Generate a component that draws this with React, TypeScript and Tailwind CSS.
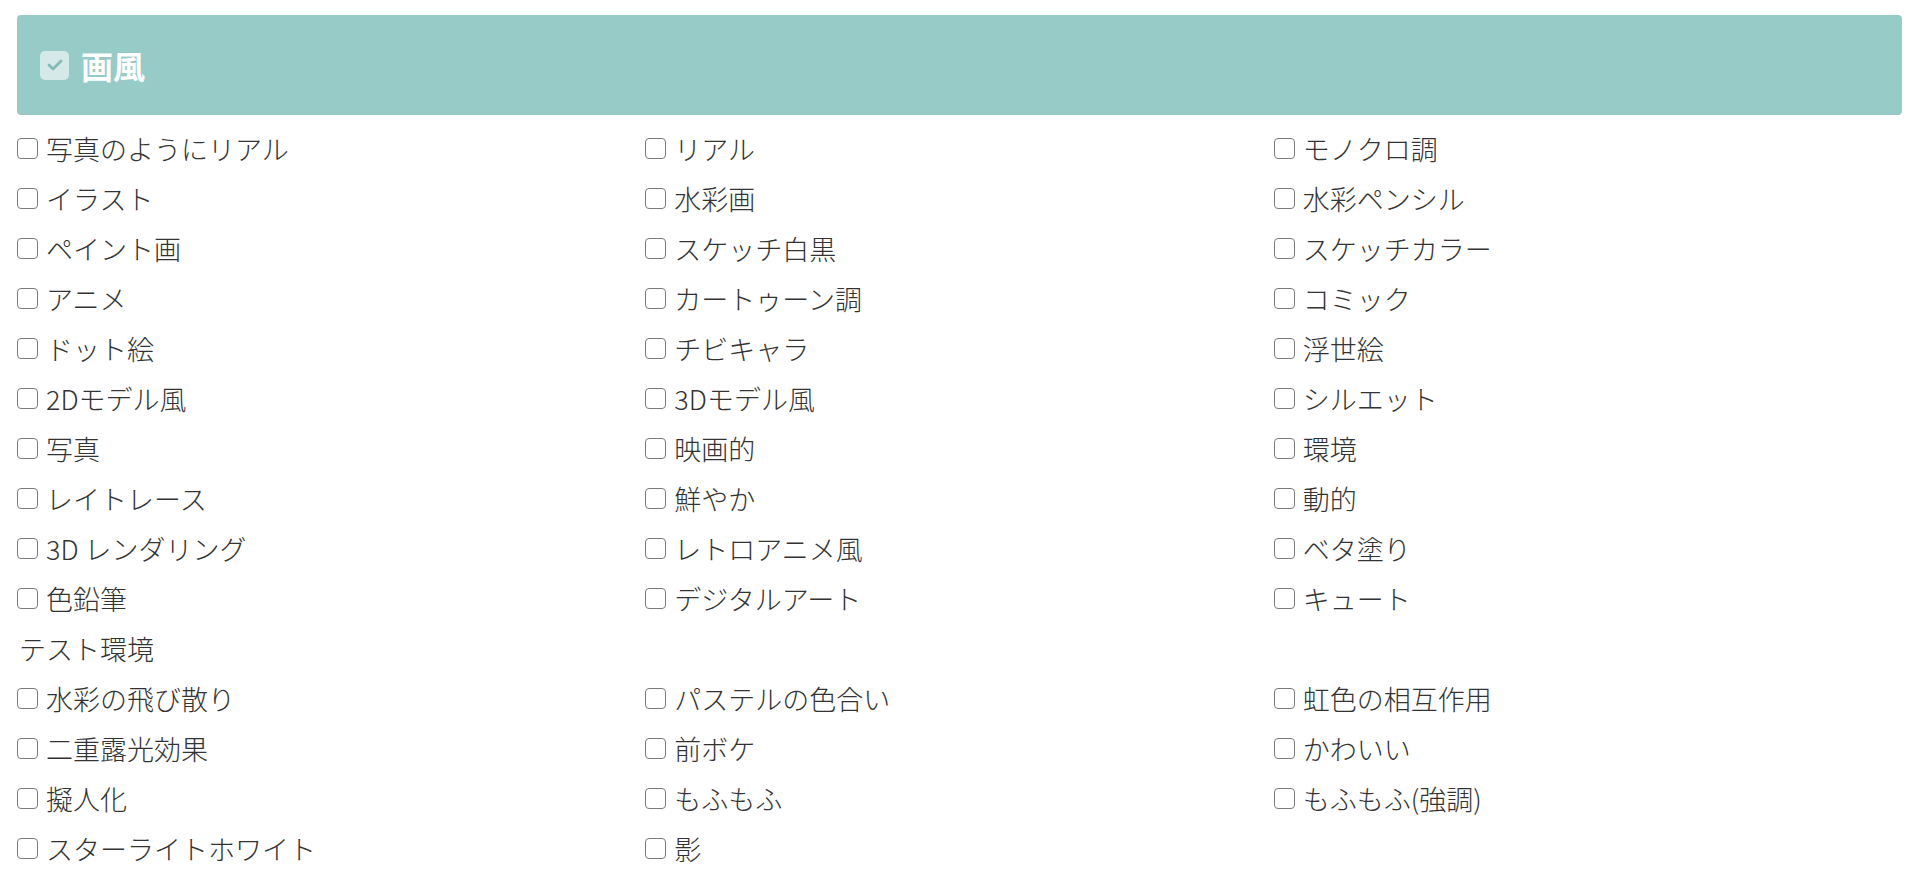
import React from 'react';

// Rows of the art-style checklist, three per line
const styles: string[] = [
  '写真のようにリアル', 'リアル', 'モノクロ調',
  'イラスト', '水彩画', '水彩ペンシル',
  'ペイント画', 'スケッチ白黒', 'スケッチカラー',
  'アニメ', 'カートゥーン調', 'コミック',
  'ドット絵', 'チビキャラ', '浮世絵',
  '2Dモデル風', '3Dモデル風', 'シルエット',
  '写真', '映画的', '環境',
  'レイトレース', '鮮やか', '動的',
  '3D レンダリング', 'レトロアニメ風', 'ベタ塗り',
  '色鉛筆', 'デジタルアート', 'キュート',
];

const testStyles: string[] = [
  '水彩の飛び散り', 'パステルの色合い', '虹色の相互作用',
  '二重露光効果', '前ボケ', 'かわいい',
  '擬人化', 'もふもふ', 'もふもふ(強調)',
  'スターライトホワイト', '影',
];

function Item({ label }: { label: string }) {
  return (
    <label className="flex h-[50px] items-center gap-[8px] cursor-pointer">
      <input
        type="checkbox"
        className="appearance-none w-[21px] h-[21px] shrink-0 rounded-[4px] border-[1.5px] border-[#7a7a7a] bg-white checked:bg-[#96cbc8]"
      />
      <span className="text-[27px] font-light leading-none text-[#333333]">{label}</span>
    </label>
  );
}

export default function App() {
  return (
    <div
      className="min-h-[896px] bg-white px-[17px] pt-[15px] pr-[18px]"
      style={{ fontFamily: '"Noto Sans CJK JP", "Noto Sans", sans-serif' }}
    >
      {/* section header */}
      <div className="flex h-[100px] items-center gap-[12px] rounded-[4px] bg-[#96cbc8] pl-[23px]">
        <span className="flex h-[29px] w-[29px] items-center justify-center rounded-[5px] bg-[#d4e9e8]">
          <svg width="16" height="12" viewBox="0 0 16 12" fill="none">
            <path d="M2 6 L6 10 L14 2" stroke="#86b9b6" strokeWidth="2.8" strokeLinecap="round" strokeLinejoin="round" />
          </svg>
        </span>
        <h2 className="text-[32px] font-bold leading-none text-white">画風</h2>
      </div>

      <div className="mt-[8px] grid grid-cols-3">
        {styles.map((s) => (
          <Item key={s} label={s} />
        ))}
        <div className="col-span-3 flex h-[50px] items-center pl-[2px] text-[27px] font-light leading-none text-[#333333]">
          テスト環境
        </div>
        {testStyles.map((s) => (
          <Item key={s} label={s} />
        ))}
      </div>
    </div>
  );
}
